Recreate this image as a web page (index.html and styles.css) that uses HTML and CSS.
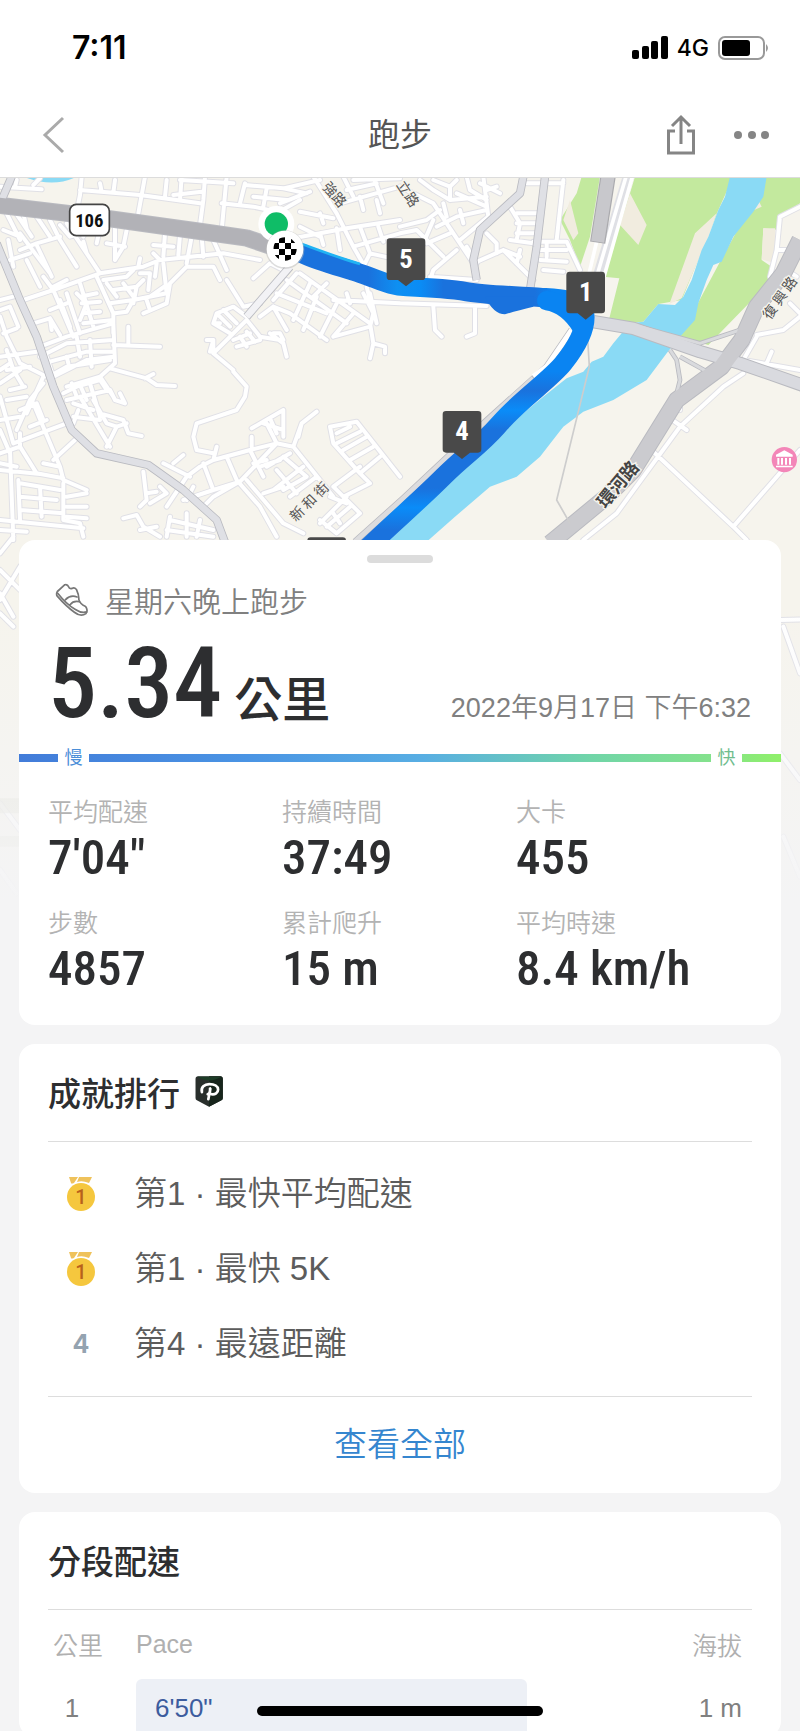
FILE: index.html
```html
<!DOCTYPE html>
<html lang="zh-Hant">
<head>
<meta charset="utf-8">
<meta name="viewport" content="width=device-width, initial-scale=1">
<title>跑步</title>
<link rel="stylesheet" href="styles.css">
</head>
<body>
<div class="app">
  <div class="status">
    <span class="clock">7:11</span>
    <div class="status-icons">
      <svg width="36" height="24" viewBox="0 0 36 24" aria-hidden="true"><rect x="0" y="14" width="7" height="9" rx="2"/><rect x="10" y="10" width="7" height="13" rx="2"/><rect x="19" y="5" width="7" height="18" rx="2"/><rect x="29" y="0" width="7" height="23" rx="2"/></svg>
      <span class="carrier">4G</span>
      <svg width="52" height="26" viewBox="0 0 52 26" aria-hidden="true"><rect x="1" y="2" width="45" height="22" rx="6" fill="none" stroke="#999" stroke-width="2"/><rect x="4" y="5" width="28" height="16" rx="3"/><path d="M48 9q4 4 0 8z" fill="#999"/></svg>
    </div>
  </div>

  <header class="nav">
    <button class="icon-btn" aria-label="返回"><svg width="24" height="38" viewBox="0 0 24 38"><path d="M21 2 3 19l18 17" fill="none" stroke="#aaa" stroke-width="3"/></svg></button>
    <h1 class="nav-title">跑步</h1>
    <div class="nav-actions">
      <button class="icon-btn" aria-label="分享"><svg width="30" height="42" viewBox="0 0 30 42" fill="none" stroke="#858585" stroke-width="3"><path d="M9 17H2.500v22h25V17H21M15 30V4M6 12l9-9 9 9"/></svg></button>
      <button class="icon-btn" aria-label="更多"><svg width="36" height="42" viewBox="0 0 36 42" fill="#858585"><circle cx="4" cy="21" r="4"/><circle cx="18" cy="21" r="4"/><circle cx="31" cy="21" r="4"/></svg></button>
    </div>
  </header>

  <main class="stage">
    <svg class="map" viewBox="0 24 2400 2460" preserveAspectRatio="xMidYMin slice" role="img" aria-label="路線地圖">
      <defs>
        <linearGradient id="fade" x1="0" y1="0" x2="0" y2="1"><stop offset="0" stop-color="#f4f4f5" stop-opacity="0"/><stop offset="1" stop-color="#f4f4f5"/></linearGradient>
        <linearGradient id="east" gradientUnits="userSpaceOnUse" x1="900" y1="0" x2="1760" y2="0">
          <stop offset="0" stop-color="#1a72dd"/><stop offset=".24" stop-color="#1a72dd"/><stop offset=".34" stop-color="#0e90f2"/><stop offset=".42" stop-color="#0a8cf5"/><stop offset=".5" stop-color="#1a72dd"/><stop offset=".82" stop-color="#1a72dd"/><stop offset=".88" stop-color="#0a84f2"/><stop offset="1" stop-color="#0a84f2"/>
        </linearGradient>
        <linearGradient id="south" gradientUnits="userSpaceOnUse" x1="0" y1="400" x2="0" y2="1130">
          <stop offset="0" stop-color="#0a84f2"/><stop offset=".15" stop-color="#0a84f2"/><stop offset=".28" stop-color="#0a84f2"/><stop offset=".36" stop-color="#1a72dd"/><stop offset=".44" stop-color="#0a8cf8"/><stop offset=".52" stop-color="#1a72dd"/><stop offset=".76" stop-color="#1a72dd"/><stop offset=".84" stop-color="#0a8cf8"/><stop offset=".93" stop-color="#1a72dd"/>
        </linearGradient>
        <clipPath id="flag"><circle cx="855" cy="237" r="35"/></clipPath>
        <path id="pin" d="M-48-124h96q10 0 10 10V-9q0 10-10 10H24L0 20-24 1h-24q-10 0-10-10v-105q0-10 10-10z"/>
        <path id="streets" d="
          M0 50 125 58M50 30 45 52M120 25 100 45M245 20 240 75 232 115M240 60 420 75 600 100M300 40 305 65M345 30 340 68M435 20 415 130M500 30 495 80M545 20 540 90M615 20 610 90 598 180M540 30 700 40M520 75 605 65
          M680 20 665 180M665 100 760 110 830 125M735 40 720 100M735 45 850 55 960 30M800 55 790 110M850 55 920 70M840 100 930 65M830 130 900 90M760 80 860 90
          M940 20 975 75 1010 130 1060 230 1100 300M1020 100 1200 50M1030 20 1060 80M1120 20 1150 100M1060 30 1200 25M1040 60 1130 40M1080 80 1090 120M1130 90 1140 130M880 205 1040 175 1200 150M900 170 960 200M900 125 1000 145M960 130 970 160M960 190 970 225M1010 175 1020 240M1060 230 1200 190M1080 170 1110 250 1085 300M1110 250 1200 270M1135 170 1150 215
          M20 130 60 210M45 125 95 200M70 130 80 175M10 180 60 200M25 210 40 290M60 190 150 310M110 140 150 200M150 150 180 210 230 290M60 240 110 220 180 200M80 270 120 350M30 270 90 250M110 225 155 320M200 160 300 310M180 165 210 200 270 185M260 170 250 200M300 175 290 220M345 175 345 270M380 180 370 230 345 270M320 220 375 230M250 215 260 250M300 310 430 290 480 270 670 250 780 270M480 270 460 250M495 190 490 260M540 195 535 255M575 200 560 280M605 200 610 260M640 210 680 300M460 225 520 230M420 265 415 290
          M0 390 40 380M70 390 160 360 300 310M130 320 160 360 220 500M160 350 200 330M180 390 210 470M150 420 200 400M0 420 30 410 55 470M0 440 20 500 60 580M10 490 50 475M100 460 150 445 155 480M150 445 180 495M230 370 260 400 240 450M240 380 290 370M245 400 300 395M250 430 300 425M290 320 340 430 340 490M240 340 280 470M200 370 240 490M250 460 340 450M120 530 200 500 340 460
          M310 330 380 320 400 300M320 340 350 380M340 360 410 350M370 340 400 380M330 400 400 390 500 370M345 430 380 425 400 390M400 400 410 350 430 330M430 430 500 400 510 340M500 370 490 280M440 390 450 420M510 340 560 290M465 320 470 280M420 310 450 310 445 360M560 290 640 290 660 330M450 380 500 345
          M340 460 345 580 300 620M340 525 480 530M385 470 385 525M330 595 440 625 470 645 525 648M435 625 460 612M340 510 200 520 120 560M150 575 260 545 340 545M140 560 160 620 260 570 340 560M200 560 205 580M270 510 275 590M165 610 200 590 330 570M230 500 240 560
          M200 650 300 620M190 670 230 650 300 630 320 660M215 640 230 680M240 645 260 690M270 640 300 740M300 620 340 680M200 690 330 660 345 690M220 700 280 720M235 720 220 760M220 740 300 750M280 690 320 760 350 770M345 690 375 700 360 670M300 730 370 750 385 790 425 798M320 830 350 770M240 680 330 830M350 770 380 760
          M0 560 110 545M0 600 30 580M20 540 40 600 70 650M20 600 90 590M60 580 140 620M0 640 60 600M30 660 75 650M20 690 80 680M50 780 90 690 130 640M0 680 40 820M60 720 110 700 130 750M0 750 60 740M130 620 80 730M90 770 140 750M100 700 180 890M40 820 200 760M0 850 60 830 60 790M0 780 30 850M160 870 225 810M60 830 110 910 190 925M130 880 180 890 190 930 260 960M0 900 120 912M30 840 40 1110M0 880 50 890M60 940 180 960M60 980 170 990M55 930 60 1050M120 950 125 1040M60 1020 190 1030M190 940 190 1050 240 1060 250 1100M200 980 260 970M200 1010 260 1010M200 1040 260 1045M0 1050 250 1075M0 1080 80 1085
          M430 905 440 990 420 1010M440 970 470 965M480 950 500 970 450 1000M370 1045 410 1035 430 1070 480 1100M420 1080 470 1070M510 1040 500 1100M560 1030 560 1100M600 1050 590 1100M510 1050 640 1080M500 1080 640 1100M500 1010 560 920 600 890 640 870 750 840 830 820 880 830M490 880 570 920M520 880 550 855M610 880 640 960 550 990M640 960 720 935M590 840 640 850M640 870 650 830M680 860 710 930 780 1010 830 1100M755 800 755 830M750 840 790 920M720 935 830 820M710 940 640 980 610 1010M560 990 580 950M740 930 850 1060 910 1090M760 880 800 870M830 820 800 760M755 775 850 720 850 800M790 760 850 780M810 745 830 790M880 830 905 760 950 725M880 830 960 930 1000 980M800 890 870 850M780 890 840 870M820 960 910 890M830 900 890 970M850 860 920 920 850 960M870 980 950 920M905 760 895 800M790 970 850 950
          M990 770 1000 820 1080 910 1110 940 1030 980M990 770 1070 755 1200 920M1010 790 1050 770M1010 820 1080 785M1030 840 1100 800M1050 870 1120 830M1080 910 1140 860M1000 950 1080 890M1000 950 1080 1030 1010 1090 960 1050M990 980 1040 1000M960 1060 1040 980M980 1070 1050 1010M1000 1030 1020 1060
          M680 330 730 410 780 400M740 440 700 410 650 430 640 460 690 490M650 430 690 470M670 420 710 460M640 460 660 460M700 490 650 540M620 510 640 510 640 550 700 600M740 450 640 550M740 450 780 500 840 510M700 510 750 490M710 530 780 510M720 500 740 530M740 485 765 515M810 490 850 520 860 560M820 490 840 490 850 510M700 605 740 650 735 680 710 720 590 760 580 800 590 840M630 545 640 510
          M850 300 810 280 760 325M890 310 820 390M900 310 1110 460M930 340 880 450M950 380 910 480M1010 400 960 500M1060 430 1000 500M860 330 1040 460M830 370 980 430M820 410 870 430 980 510M780 440 820 410 860 480M940 380 980 340M1000 500 1110 470 1120 430 1090 370M1110 460 1120 520 1110 565M1120 520 1155 530 1155 550M1000 390 1200 400M1110 370 1130 460M1040 370 1050 400M1110 390 1100 350
          M1200 170 1280 150 1320 120M1200 190 1250 180 1330 260M1200 50 1300 100 1420 280M1260 30 1300 60 1350 90 1350 50 1300 30M1350 50 1370 30M1330 100 1340 140M1300 150 1270 220M1310 170 1370 140 1460 120M1280 220 1350 190M1350 90 1460 80M1370 70 1460 110M1400 20 1410 60 1460 90M1450 20 1465 140 1380 210M1460 60 1490 50M1380 120 1390 160M1440 40 1500 70M1530 110 1560 160 1550 210M1550 130 1610 130M1550 160 1605 160M1550 190 1605 190M1530 210 1600 220M1460 190 1490 220 1490 250M1420 280 1510 240 1560 260M1510 240 1600 330M1560 240 1550 280M1580 40 1690 40M1690 30 1670 210M1600 215 1700 215 1740 300M1620 240 1700 240M1620 270 1700 275M1630 300 1690 305M1640 215 1640 260M1290 330 1300 300 1370 240M1290 320 1430 330M1430 280 1400 230M1200 400 1460 408M1300 410 1305 480 1325 500M1425 410 1425 490 1400 500
          M2400 110 2340 140 2330 240 2310 320M2330 240 2360 240 2380 260M2360 300 2390 320M2400 440 2350 480 2270 495M2370 400 2400 430M2400 600 2230 570 2270 500M2300 580 2315 545M1960 845 2200 1070 2240 1110M2200 1070 2400 840M2010 745 2060 780M2040 700 2040 720M1750 1110 1850 1030 2040 770 2170 650 2230 610
          M0 1150 40 1100M0 1290 60 1190 100 1140M0 1270 40 1340M0 1200 60 1260M0 1330 40 1370M2340 1350 2410 1348M2350 1370 2400 1510M2340 1750 2400 1830M0 1900 60 1980M0 2100 50 2170M2350 2000 2400 2120"/>
      </defs>
      <rect y="0" width="2400" height="2500" fill="#f6f4ed"/>
      <path d="M1745 20 1730 70 1680 150 1710 210 1740 290 1770 200 1800 20zM1905 20 1890 70 1860 165 1810 320 1858 325 1828 445 1890 458 1930 455 1975 402 2045 390 2155 120 2200 20zM2300 20 2160 275 2040 500 2125 525 2310 335 2315 290 2285 270 2290 175 2335 180 2340 140 2400 100V20z" fill="#c3e99e"/>
      <path d="M1890 70 1940 165 1915 225 1860 165zM1690 150 1720 210 1735 190 1710 90zM2150 130 2085 190 2008 402 2045 385 2125 200zM2290 175H2325V280L2285 268zM2275 90 2240 130 2285 110z" fill="#f1ecdf"/>
      <path d="M70 20q90 35 160 0zM2190 20 2175 80 2155 120 2125 200 2105 240 2075 330 2050 380 2025 405 1975 402 1930 455 1890 460 1840 520 1810 560 1775 575 1750 605 1700 625 1630 680 1570 730 1510 780 1450 830 1350 900 1080 1120H1275L1365 1040 1470 950 1550 920 1620 860 1690 770 1750 725 1840 690 1940 630 2000 550 2040 500 2085 450 2095 400 2120 330 2140 285 2165 275 2200 200 2260 125 2290 80 2300 20z" fill="#8adaf5"/>
      <use href="#streets" class="casing"/>
      <use href="#streets" class="street"/>
      <g class="major-casing">
        <path d="M35 20 5 90M-10 220 60 390 110 500 160 650 215 780 290 850 445 885 550 960 650 1050 680 1130M1570 20 1560 70 1440 180 1420 270 1430 330M1635 20 1610 230 1590 360M870 290 740 440" stroke-width="25"/>
        <path d="M1715 480 1640 590 1445 765 1210 985 1065 1115" stroke-width="20"/>
        <path d="M1920 470 2100 520 2220 480M2010 540 2030 570 2040 630 2025 690 1960 800M2040 560 2130 610" stroke-width="14"/>
        <path d="M-10 105 270 138 600 184 740 204 840 238M2400 210 2350 310 2270 410 2225 510 2165 590 2030 690 1900 900 1820 980 1650 1120" stroke-width="52"/>
        <path d="M1780 455 1900 475 2100 545 2220 580 2420 650" stroke-width="40"/>
      </g>
      <g class="major">
        <path d="M35 20 5 90M-10 220 60 390 110 500 160 650 215 780 290 850 445 885 550 960 650 1050 680 1130M1570 20 1560 70 1440 180 1420 270 1430 330M1635 20 1610 230 1590 360" stroke="#dfe0e5" stroke-width="20"/>
        <path d="M870 290 740 440" stroke="#f2f2f5" stroke-width="20"/>
        <path d="M1715 480 1640 590 1600 620" stroke="#fff" stroke-width="16"/>
        <path d="M1600 625 1445 765 1210 985 1065 1115" stroke="#dcdcde" stroke-width="15"/>
        <path d="M1920 470 2100 520 2220 480M2010 540 2030 570 2040 630 2025 690 1960 800M2040 560 2130 610" stroke="#d9dadd" stroke-width="9"/>
        <path d="M1885 20 1795 320" stroke="#dfe0e5" stroke-width="34"/>
        <path d="M1878 20 1790 320M1897 20 1812 320M1790 215 1765 320" stroke="#fff" stroke-width="11"/>
        <path d="M1780 455 1900 475 2100 545 2220 580 2420 650" stroke="#d9dadf" stroke-width="34"/>
        <path d="M1824 20 1793 218" stroke="#aaaaae" stroke-width="46"/>
        <path d="M1824 20 1793 215" stroke="#c8c8cc" stroke-width="39"/>
        <path d="M-10 105 270 138 600 184 740 204 840 238" stroke="#b2b2b7" stroke-width="46"/>
        <path d="M2400 210 2350 310 2270 410 2225 510 2165 590 2030 690 1900 900 1820 980 1650 1120" stroke="#cbcbcf" stroke-width="46"/>
        <path d="M1762 490 1768 590 1670 990 1710 1060" stroke="#cdcdcd" stroke-width="5"/>
      </g>
      <path d="M905 250C960 275 1020 290 1080 310S1170 348 1220 350 1340 355 1400 365 1560 378 1620 382 1720 385 1752 420" class="route" stroke="url(#east)"/>
      <path d="M1640 392Q1700 400 1745 470" class="route" stroke="#0a84f2"/>
      <path d="M1752 420C1765 470 1730 530 1690 580S1560 690 1500 760 1400 850 1330 920 1200 1040 1095 1140" class="route" stroke="url(#south)"/>
      <path d="M1455 380Q1480 432 1515 433 1550 422 1600 410V380z" fill="#1a72dd"/>
      <path d="M905 222C960 242 1020 265 1080 282" fill="none" stroke="#21b3f3" stroke-width="8"/>
      <g class="map-label">
        <g transform="translate(1006 72) rotate(50)"><text font-size="42">強路</text></g>
        <g transform="translate(1226 70) rotate(57)"><text font-size="42">立路</text></g>
        <g transform="translate(926 993) rotate(-45)"><text font-size="42">新 和 街</text></g>
        <g transform="translate(2337 382) rotate(-55)"><text font-size="42">復 興 路</text></g>
        <g class="strong" transform="translate(1850 940) rotate(-50)"><text font-size="54">環河路</text></g>
      </g>
      <rect x="209" y="103" width="119" height="94" rx="20" fill="#fff" stroke="#444" stroke-width="5"/>
      <text class="pin-text" x="268" y="171" font-size="56" fill="#111">106</text>
      <circle cx="829" cy="162" r="54" fill="#fff"/><circle cx="829" cy="162" r="35" fill="#0fbd67"/>
      <circle cx="855" cy="239" r="58" fill="#bbb" opacity=".5"/><circle cx="855" cy="237" r="55" fill="#fff"/>
      <g clip-path="url(#flag)"><path d="M837 201h18v18h-18zM873 201h20v18h-20zM820 219h17v18h-17zM855 219h18v18h-18zM837 237h18v18h-18zM873 237h18v18h-18zM820 255h17v18h-17zM855 255h18v18h-18z"/></g>
      <g fill="#494949">
        <use href="#pin" x="1218" y="329"/><use href="#pin" x="1757" y="429"/><use href="#pin" x="1386" y="847"/><use href="#pin" x="980" y="1226"/>
      </g>
      <g class="pin-text" fill="#fff" font-size="80">
        <text x="1218" y="293">5</text><text x="1757" y="393">1</text><text x="1386" y="811">4</text>
      </g>
      <circle cx="2353" cy="869" r="38" fill="#f386b8"/>
      <path d="M2328 860v-6l25-13 25 13v6zM2332 864h6v20h-6zM2343 864h6v20h-6zM2355 864h6v20h-6zM2367 864h6v20h-6zM2328 887h50v5h-50z" fill="#fff"/>
      <path d="M0 1885H57V1930H0zM0 1998H57V2030H0z" fill="#dcdccf" opacity=".6"/>
      <rect y="1300" width="2400" height="900" fill="url(#fade)"/>
      <rect y="2199" width="2400" height="300" fill="#f4f4f5"/>
    </svg>

    <div class="cards">
      <section class="card summary">
        <div class="handle"></div>
        <div class="activity">
          <svg width="34" height="34" viewBox="46 38 100 100" fill="none" stroke="#777" stroke-width="5" stroke-linejoin="round" stroke-linecap="round" aria-hidden="true"><path d="M53 63 75 43q8-2 11 6 2 7 10 5 7-4 13 3 8 18 7 29 3 13 20 21 8 11 1 21-15 11-34-4-24-17-51-48-3-7 1-13z"/><path d="M54 68q25 32 52 48 18 12 33 7M77 87q14-15 34-8M91 101q9-12 27-8"/></svg>
          <span>星期六晚上跑步</span>
        </div>
        <div class="distance">
          <div class="amount"><span class="big">5.34</span><span class="unit">公里</span></div>
          <time datetime="2022-09-17T18:32">2022年9月17日 下午6:32</time>
        </div>
        <div class="pace-scale"><span class="slow">慢</span><span class="fast">快</span></div>
        <dl class="stats">
          <div><dt>平均配速</dt><dd>7'04"</dd></div>
          <div><dt>持續時間</dt><dd>37:49</dd></div>
          <div><dt>大卡</dt><dd>455</dd></div>
          <div><dt>步數</dt><dd>4857</dd></div>
          <div><dt>累計爬升</dt><dd>15 m</dd></div>
          <div><dt>平均時速</dt><dd>8.4 km/h</dd></div>
        </dl>
      </section>

      <section class="card">
        <h2 class="card-title">成就排行
          <svg width="28" height="31" viewBox="584 116 82 92" aria-hidden="true"><path d="M593 117h65q8 0 8 8v56q0 5-4 7l-37 19-36-19q-4-2-4-7v-56q0-8 8-8z" fill="#292f2c"/><path d="M625 117h33q8 0 8 8v56q0 5-4 7l-37 19z" fill="#17251c"/><path d="M590 118q35 22 72 0z" fill="#1d3c27"/><path d="M604 164c-4-15 8-24 22-24 16 0 26 7 26 16 0 10-9 16-20 14M628 153q2 14-7 17M629 154l-6 31" fill="none" stroke="#fff" stroke-width="8" stroke-linecap="round"/></svg>
        </h2>
        <ul class="ranks">
          <li><svg class="medal" width="28" height="34" viewBox="0 0 28 34" role="img" aria-label="金牌"><path d="M2 0h9L7 6q-3 1-3 0zM12 0h13l-3 6Q15 3 10 5z" fill="#efc25b"/><circle cx="14" cy="20" r="14" fill="#f5c73e"/><text x="14" y="27">1</text></svg><span class="rank-name">第1 · 最快平均配速</span></li>
          <li><svg class="medal" width="28" height="34" viewBox="0 0 28 34" role="img" aria-label="金牌"><path d="M2 0h9L7 6q-3 1-3 0zM12 0h13l-3 6Q15 3 10 5z" fill="#efc25b"/><circle cx="14" cy="20" r="14" fill="#f5c73e"/><text x="14" y="27">1</text></svg><span class="rank-name">第1 · 最快 5K</span></li>
          <li><span class="rank-number">4</span><span class="rank-name">第4 · 最遠距離</span></li>
        </ul>
        <a class="see-all" href="#all">查看全部</a>
      </section>

      <section class="card splits">
        <h2 class="card-title">分段配速</h2>
        <table>
          <thead><tr><th class="km" scope="col">公里</th><th scope="col">Pace</th><th class="elev" scope="col">海拔</th></tr></thead>
          <tbody><tr><td class="km">1</td><td><div class="bar" style="width:76%">6'50"</div></td><td class="elev">1 m</td></tr></tbody>
        </table>
      </section>
    </div>
  </main>
  <div class="home-indicator"></div>
</div>
</body>
</html>
```
FILE: styles.css
```css
* { box-sizing: border-box; }
body { margin: 0; background: #f4f4f5; font-family: "Liberation Sans", "Noto Sans CJK TC", sans-serif; color: #2d2e30; }
h1, h2, dl, dd, ul { margin: 0; padding: 0; }
button { border: 0; padding: 0; background: none; }
svg { display: block; flex: none; }

.app { height: 100vh; display: flex; flex-direction: column; overflow: hidden; background: #fff; }
.status { flex: none; height: 93px; padding: 3px 30px 0 72px; display: flex; align-items: center; justify-content: space-between; color: #000; }
.clock { font: 600 32px/36px Inter, sans-serif; }
.status-icons { display: flex; align-items: center; gap: 9px; }
.carrier { font: 500 23px/24px Inter, sans-serif; }

.nav { flex: none; height: 85px; padding: 0 30px 0 42px; display: grid; grid-template-columns: 1fr auto 1fr; align-items: center; border-bottom: 1px solid #dcdcdc; }
.nav-title { padding-right: 12px; font-size: 32px; line-height: 40px; font-weight: 400; color: #555; }
.nav-actions { display: flex; gap: 38px; justify-content: flex-end; }
.icon-btn { justify-self: start; }

.stage { flex: 1; min-height: 0; display: grid; grid-template-columns: 100%; align-content: start; overflow-y: auto; scrollbar-width: none; background: #f4f4f5; }
.map, .cards { grid-area: 1 / 1; }
.map { width: 100%; height: 820px; }
.casing, .street, .major, .major-casing, .route { fill: none; stroke-linejoin: round; stroke-linecap: round; }
.casing { stroke: #e0e0e6; stroke-width: 18; }
.street { stroke: #fff; stroke-width: 12; }
.major, .major-casing { stroke-linecap: butt; }
.major-casing { stroke: #b9bac0; }
.route { stroke-width: 58; }
.map-label { font-family: "Noto Sans CJK TC", sans-serif; text-anchor: middle; dominant-baseline: central; fill: #555; stroke: #f6f4ed; stroke-width: 8; paint-order: stroke; }
.strong { font-weight: 700; fill: #444; }
.pin-text { font-family: "Liberation Sans Narrow", "Roboto Condensed", Roboto, sans-serif; font-weight: 700; text-anchor: middle; }

.cards { position: relative; padding: 362px 19px 0; display: flex; flex-direction: column; gap: 19px; }
.card { background: #fff; border-radius: 16px; padding: 0 29px; }
.handle { width: 66px; height: 8px; border-radius: 4px; background: #dcdcdc; margin: 0 auto; }
.summary { padding: 15px 0 27px; }
.activity { display: flex; align-items: center; gap: 16px; height: 46px; margin: 14px 36px 0; font-size: 29px; font-weight: 350; color: #808080; }
.distance { display: flex; justify-content: space-between; align-items: baseline; height: 122px; line-height: 122px; padding: 0 30px 0 29px; }
.amount { display: flex; align-items: baseline; gap: 12px; }
.big { font-family: "Liberation Sans Narrow", "Roboto Condensed", Roboto, sans-serif; font-weight: 500; font-size: 98px; }
.unit { font-size: 48px; font-weight: 500; }
.distance time { font-size: 27px; color: #808080; font-weight: 350; }
.pace-scale { display: flex; justify-content: space-between; padding: 0 39px; background: linear-gradient(90deg, #427cd9, #4a94e4 30%, #58aee3 53%, #70d5a8 75%, #84e28c 91%, #8ff069) center / 100% 8px no-repeat; font-size: 18px; line-height: 26px; }
.pace-scale span { background: #fff; width: 31px; text-align: center; }
.slow { color: #4a8ed8; }
.fast { color: #70bd8e; }
.stats { display: grid; grid-template-columns: repeat(3, 1fr); row-gap: 19px; padding: 24px 31px 0 29px; }
.stats dt { font-size: 25px; line-height: 34px; font-weight: 350; color: #b3b3b3; }
.stats dd { font: 500 49px/58px "Liberation Sans Narrow", "Roboto Condensed", Roboto, sans-serif; }

.card-title { display: flex; align-items: center; gap: 15px; height: 98px; padding-bottom: 2px; border-bottom: 1px solid #ddd; font-size: 33px; font-weight: 500; }
.ranks { list-style: none; padding: 14px 0 15px; border-bottom: 1px solid #ddd; }
.ranks li { display: flex; align-items: center; height: 75px; padding-left: 19px; gap: 39px; }
.rank-name { padding-bottom: 6px; font-size: 33px; font-weight: 350; color: #5c5c5c; }
.medal text { font: 500 20px Roboto, sans-serif; fill: #b9611b; text-anchor: middle; }
.rank-number { width: 28px; text-align: center; font: 700 25px Inter, sans-serif; color: #94a3b0; }
.see-all { display: block; line-height: 96px; text-align: center; font-size: 33px; font-weight: 350; color: #3586cf; text-decoration: none; }

table { width: 100%; table-layout: fixed; border-collapse: collapse; }
th, td { padding: 0; text-align: left; font-weight: 350; color: #808080; }
th { height: 69px; padding-bottom: 1px; font-size: 25px; color: #b0b0b0; }
td { font-size: 26px; }
.km { width: 88px; text-align: center; white-space: nowrap; }
th.km { padding-left: 5px; padding-right: 35px; }
td.km { padding-right: 40px; }
.elev { width: 102px; padding-right: 10px; text-align: right; }
.bar { height: 58px; line-height: 58px; padding-left: 19px; border-radius: 6px; background: #edf0f6; color: #3c5c9e; }
.home-indicator { position: fixed; bottom: 15px; left: 50%; width: 286px; height: 10px; margin-left: -143px; border-radius: 5px; background: #000; }
```
